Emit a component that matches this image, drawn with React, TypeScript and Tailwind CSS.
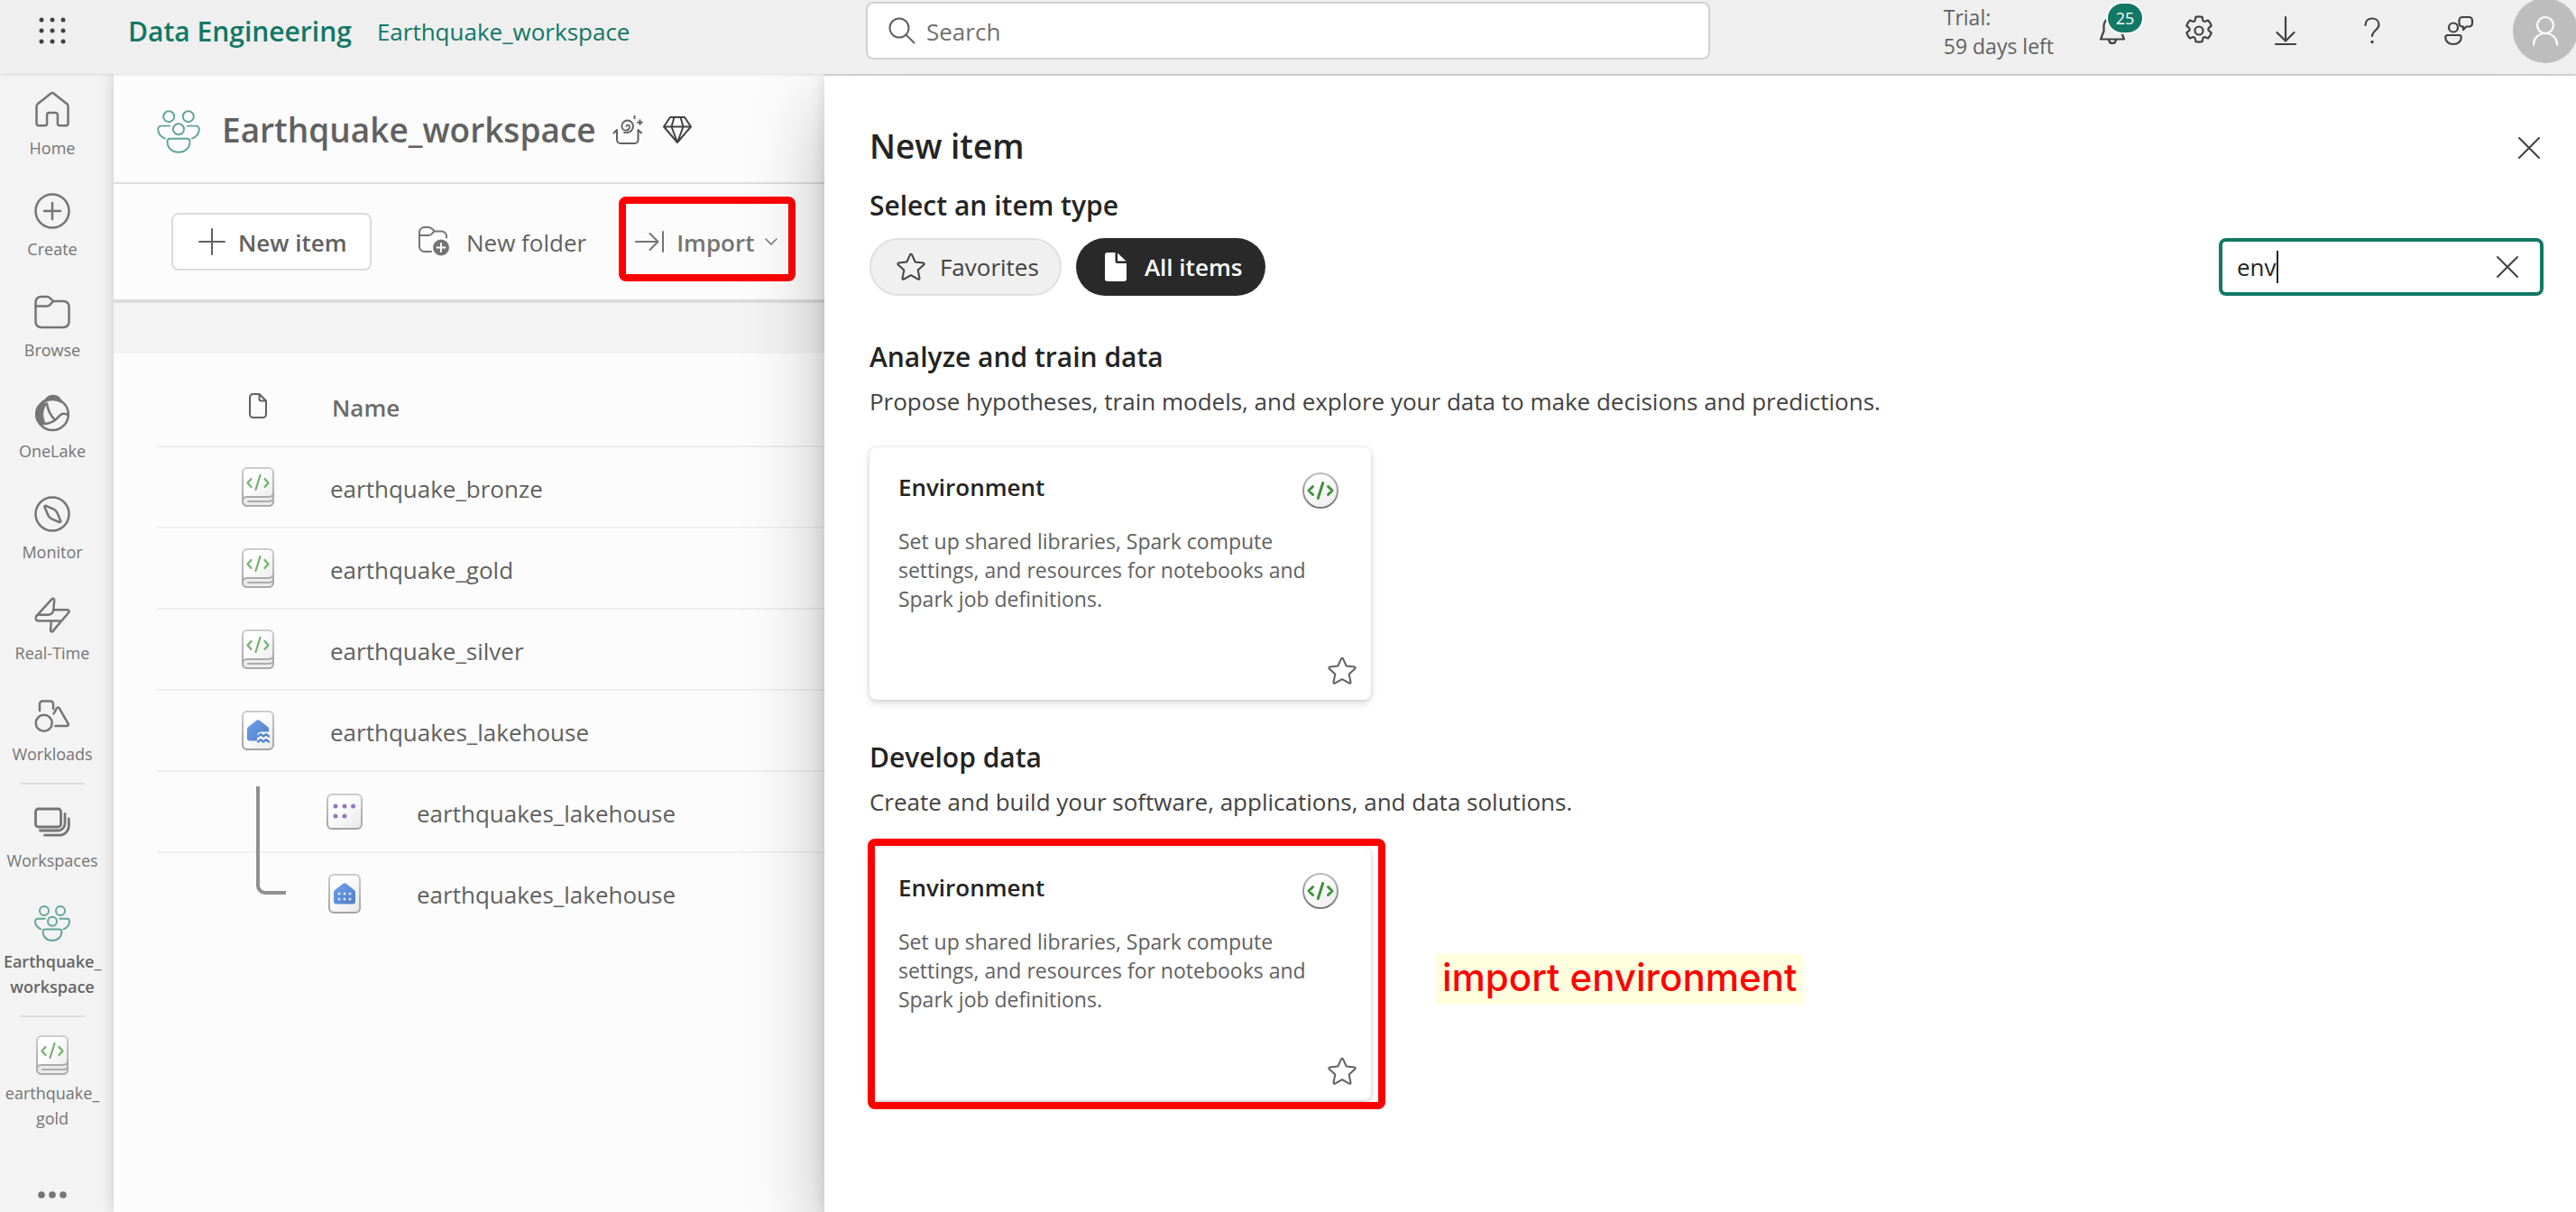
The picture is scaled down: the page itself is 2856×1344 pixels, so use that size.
import { useState, type ReactNode } from "react";

type IconProps = { w?: number; h?: number; sw?: number; className?: string; children: ReactNode };

function Icon({ w = 40, h = 40, sw = 2.5, className = "", children }: IconProps) {
  return (
    <svg
      width={w}
      height={h}
      viewBox={`0 0 ${w} ${h}`}
      fill="none"
      stroke="currentColor"
      strokeWidth={sw}
      strokeLinecap="round"
      strokeLinejoin="round"
      aria-hidden="true"
      className={`block shrink-0 overflow-visible ${className}`}
    >
      {children}
    </svg>
  );
}

const HomeIcon = () => (
  <Icon>
    <path d="M2.5 35V16c0-1 .5-2 1.2-2.7L18 1.9a3 3 0 0 1 4 0l14.3 11.4c.8.7 1.2 1.7 1.2 2.7V35a2.2 2.2 0 0 1-2.2 2.2h-7.2a2.2 2.2 0 0 1-2.2-2.2v-9.5a2.5 2.5 0 0 0-2.5-2.500h-6.800a2.500 2.500 0 0 0-2.500 2.500V35a2.200 2.200 0 0 1-2.200 2.200H4.700A2.200 2.200 0 0 1 2.500 35z" />
  </Icon>
);
const CreateIcon = () => (
  <Icon>
    <circle cx="20" cy="20" r="18.5" />
    <path d="M20 11v18M11 20h18" />
  </Icon>
);
const BrowseIcon = () => (
  <Icon>
    <path d="M1.5 9a6 6 0 0 1 6-6H14a5 5 0 0 1 3.5 1.5L21 8h11.500a6 6 0 0 1 6 6v17a6 6 0 0 1-6 6h-25a6 6 0 0 1-6-6z" />
    <path d="M1.5 13.5H14a4.500 4.500 0 0 0 3.300-1.400L21 8" />
  </Icon>
);
const OneLakeIcon = () => (
  <Icon>
    <circle cx="20.2" cy="21.5" r="17.6" />
    <path d="M9 8.500C1 11 .5 21 2.500 28l4.500 5 6-.5C8.500 26 8.500 16 13.500 10z" fill="currentColor" strokeWidth="1" />
    <path d="M11 8C13 3 17 .6 21 .6c4.600 0 8 3 9 7.600C25 4.800 17 4.600 11 8z" fill="currentColor" strokeWidth="1.5" />
    <path d="M14 9.500c.8 6.500 3.500 12.500 9 18.500M8 31.800c6 .5 11-.8 15-3.800 3.800-2.800 5-6.500 8.500-7.200 2.500-.5 4 .7 6.300 1" />
  </Icon>
);
const MonitorIcon = () => (
  <Icon>
    <circle cx="20" cy="20" r="18.5" />
    <path d="M11.5 12.2c-.4-1 .5-1.700 1.400-1.300l8.600 3.700c1.800.8 2.900 1.900 3.700 3.700l4 9.200c.4 1-.5 1.900-1.500 1.500l-9-3.900c-1.700-.8-2.600-1.800-3.300-3.500z" />
  </Icon>
);
const RealTimeIcon = () => (
  <Icon>
    <path d="M2.6 20.800 19.700 2.200c1-1 2.600-.4 2.500 1.100l-.8 10.200c-.4 4-2.600 6.200-6.400 6.200H4" />
    <path d="M21.800 14.300H36.800c1.700 0 2.400 1.600 1.300 2.900L20.600 37.900c-1 1.200-2.700.5-2.600-1L18.800 27" />
    <path d="M2.6 20.800c-2 2.400-1 5.700 2.200 5.700h23.400" />
  </Icon>
);
const WorkloadsIcon = () => (
  <Icon>
    <circle cx="10.7" cy="27.7" r="9" />
    <path d="M6 14V6.500A3 3 0 0 1 9 3.500h9a3 3 0 0 1 3 3V12" />
    <path d="m21.500 17.500 3.300-6.200a1.700 1.700 0 0 1 3 0L37.600 28.700a1.600 1.600 0 0 1-1.400 2.400H23.500" />
  </Icon>
);
const WorkspacesIcon = () => (
  <Icon sw={2.8}>
    <rect x="1.5" y="5" width="28" height="20" rx="3" />
    <path d="M6.500 29H26a8 8 0 0 0 8-8V10.500M11.500 34.200h16c6 0 10.800-4.500 10.800-10.500V16" />
  </Icon>
);

function PeopleIcon({ size }: { size: number }) {
  return (
    <svg
      width={size}
      height={size}
      viewBox="0 0 40 40"
      fill="none"
      stroke="#5fa596"
      strokeWidth={size > 40 ? 1.6 : 1.9}
      strokeLinecap="round"
      strokeLinejoin="round"
      aria-hidden="true"
      className="block shrink-0"
    >
      <circle cx="11" cy="6" r="5" />
      <circle cx="29" cy="6" r="5" />
      <circle cx="20" cy="17.7" r="5" />
      <path d="M11.700 14.700H3.900A2.900 2.900 0 0 0 1 17.600c0 4.300 2.500 7.300 6.500 8.700M28.300 14.700h7.800a2.900 2.900 0 0 1 2.900 2.900c0 4.300-2.500 7.300-6.500 8.700" />
      <path d="M12.200 26.500h15.600a2.600 2.600 0 0 1 2.600 2.600c0 6-4.200 9.900-10.400 9.900S9.600 35.100 9.600 29.100a2.600 2.600 0 0 1 2.600-2.600z" />
    </svg>
  );
}

function Defs() {
  return (
    <svg width="0" height="0" className="absolute" aria-hidden="true">
      <defs>
        <linearGradient id="paper" x1="0" y1="0" x2="1" y2="1">
          <stop offset="0.3" stopColor="#ffffff" />
          <stop offset="1" stopColor="#e9e9e9" />
        </linearGradient>
        <linearGradient id="edge" x1="0" y1="0" x2="0" y2="1">
          <stop offset="0" stopColor="#cbcbcb" />
          <stop offset="1" stopColor="#a3a3a3" />
        </linearGradient>
        <linearGradient id="edgeDark" x1="0" y1="0" x2="0" y2="1">
          <stop offset="0" stopColor="#bcbcbc" />
          <stop offset="1" stopColor="#7a7a7a" />
        </linearGradient>
        <linearGradient id="blue" x1="0" y1="0" x2="1" y2="1">
          <stop offset="0" stopColor="#6ea1f1" />
          <stop offset="1" stopColor="#4f7dc0" />
        </linearGradient>
      </defs>
    </svg>
  );
}

const NotebookIcon = () => (
  <Icon w={36} h={44} sw={2}>
    <rect x="1" y="1" width="34" height="42" rx="5" fill="url(#paper)" stroke="url(#edge)" />
    <path d="M1 38c0-3.500 1.500-5 4.500-5h24c3 0 5-1 5.500-3.500V38a5 5 0 0 1-5 5H6a5 5 0 0 1-5-5z" fill="#ececec" stroke="#ababab" />
    <path d="M7 38h23c2.800 0 4.500-1 5-3" stroke="#ababab" />
    <path d="m10.500 13-4 4.500 4 4.500M25.500 13l4 4.500-4 4.500M20.500 9l-5 16" stroke="#72b16c" strokeWidth="2.2" />
  </Icon>
);
const LakehouseIcon = () => (
  <Icon w={36} h={44} sw={2}>
    <rect x="1" y="1" width="34" height="42" rx="5" fill="url(#paper)" stroke="url(#edge)" />
    <path d="M6 20.500c0-1 .4-1.800 1.200-2.400l9-7.200a3 3 0 0 1 3.700 0l9 7.200c.7.600 1.100 1.400 1.100 2.400V33.500H9a3 3 0 0 1-3-3z" fill="url(#blue)" stroke="none" />
    <path d="M17 35V26.500c1-2 3-3 5-3h8v12z" fill="#f3f3f3" stroke="none" />
    <path d="m18 28.500 3-2.200 3 2.200 3-2.200 3 2.200M18 34.500l3-2.200 3 2.200 3-2.200 3 2.200" stroke="#5685cf" strokeWidth="2.3" />
  </Icon>
);
const SemanticModelIcon = () => (
  <Icon w={40} h={40} sw={2}>
    <rect x="1" y="1" width="38" height="38" rx="5" fill="url(#paper)" stroke="url(#edge)" />
    <g fill="#9478c6" stroke="none">
      <circle cx="10" cy="14" r="2.5" />
      <circle cx="20" cy="14" r="2.5" />
      <circle cx="29.5" cy="14" r="2.5" />
      <circle cx="10" cy="25" r="2.5" />
      <circle cx="20" cy="25" r="2.5" />
    </g>
  </Icon>
);
const SqlEndpointIcon = () => (
  <Icon w={36} h={44} sw={2}>
    <rect x="1" y="1" width="34" height="42" rx="5" fill="url(#paper)" stroke="url(#edge)" />
    <path d="M6 20.500c0-1 .4-1.800 1.200-2.400l9-7.200a3 3 0 0 1 3.700 0l9 7.200c.7.600 1.100 1.400 1.100 2.400V30.500a3 3 0 0 1-3 3H9a3 3 0 0 1-3-3z" fill="url(#blue)" stroke="none" />
    <g fill="#dfe9fb" stroke="none">
      {[12, 18, 24].map((x) => [22, 28].map((y) => <circle key={`${x}-${y}`} cx={x} cy={y} r="1.5" />))}
    </g>
  </Icon>
);
const EnvironmentIcon = () => (
  <Icon w={40} h={40} sw={2}>
    <circle cx="20" cy="20" r="19" fill="url(#paper)" stroke="url(#edgeDark)" />
    <path d="m11.500 15.500-4.500 4.500 4.500 4.500M28.500 15.500l4.500 4.500-4.500 4.500M22.700 11.500l-5.400 17" stroke="#3f9139" strokeWidth="3" />
  </Icon>
);
const StarIcon = () => (
  <Icon w={32} h={32} sw={2}>
    <path d="M15 2.300a1.100 1.100 0 0 1 2 0l3.700 8.200 9 1.100c.9.100 1.300 1.200.6 1.900l-6.600 6.100 1.800 8.900c.2.900-.8 1.600-1.600 1.100L16 25.200l-7.900 4.400c-.8.5-1.800-.2-1.600-1.100l1.800-8.900-6.600-6.100c-.7-.7-.3-1.800.6-1.900l9-1.100z" />
  </Icon>
);
const CloseIcon = () => (
  <Icon w={24} h={24} sw={2}>
    <path d="m1 1 22 22M23 1 1 23" />
  </Icon>
);
const SandboxIcon = () => (
  <Icon w={34} h={32} sw={2}>
    <path d="M1.500 19.500 5 16v11a4 4 0 0 0 4 4h15.500a4 4 0 0 0 4-4V16l3.500 3.500" />
    <path d="M13 18.800c5 1.200 10-1.800 10-7a6.300 6.300 0 0 0-12.600 0c0 3 2 5 4.700 4.800 2.500-.2 4-2 3.800-4.200-.3-2-2.800-2.400-3.400-.6" strokeWidth="1.9" />
    <path d="M24.500.8v2.400M30.500 5.300v4.800M28.100 7.700h4.800" />
  </Icon>
);
const GemIcon = () => (
  <Icon w={32} h={30} sw={2}>
    <path d="M8 1h16l7 10.500L16 29 1 11.500zM1 11.500h30M12.500 1 9.500 11.500 16 29l6.500-17.500L19.500 1" />
  </Icon>
);

type NavEntry = { label: string[]; icon: ReactNode; active?: boolean; divided?: boolean };

const nav: NavEntry[] = [
  { label: ["Home"], icon: <HomeIcon /> },
  { label: ["Create"], icon: <CreateIcon /> },
  { label: ["Browse"], icon: <BrowseIcon /> },
  { label: ["OneLake"], icon: <OneLakeIcon /> },
  { label: ["Monitor"], icon: <MonitorIcon /> },
  { label: ["Real-Time"], icon: <RealTimeIcon /> },
  { label: ["Workloads"], icon: <WorkloadsIcon /> },
  { label: ["Workspaces"], icon: <WorkspacesIcon />, divided: true },
  { label: ["Earthquake_", "workspace"], icon: <PeopleIcon size={40} />, active: true },
  { label: ["earthquake_", "gold"], icon: <NotebookIcon />, divided: true },
];

function SideNav() {
  return (
    <nav aria-label="Main" className="flex w-[126px] shrink-0 flex-col items-center bg-[#f3f3f3] pt-[2px] pr-[10px] text-[#757575]">
      {nav.map((n) => (
        <div key={n.label.join("")} className="flex w-full flex-col items-center">
          {n.divided && <div className="mb-1 h-[2px] w-[72px] bg-[#dcdcdc]" />}
          <a
            href="#"
            className={
              n.active
                ? "flex flex-col items-center gap-2 py-[18px] text-center text-[18px] leading-[28px] font-semibold text-[#666666]"
                : "flex flex-col items-center gap-2 py-[18px] text-center text-[18px] leading-[28px]"
            }
          >
            <span className="flex size-10 items-center justify-center">{n.icon}</span>
            <span>
              {n.label.map((l) => (
                <span key={l} className="block">
                  {l}
                </span>
              ))}
            </span>
          </a>
        </div>
      ))}
      <button aria-label="More" className="mt-auto flex h-[38px] w-10 items-center justify-center">
        <Icon w={32} h={8}>
          <g fill="currentColor" stroke="none">
            <circle cx="4" cy="4" r="3.8" />
            <circle cx="16" cy="4" r="3.8" />
            <circle cx="28" cy="4" r="3.8" />
          </g>
        </Icon>
      </button>
    </nav>
  );
}

function Header() {
  return (
    <header className="relative z-20 flex h-[82px] items-center bg-[#efefef] pb-[14px] text-[#424242] shadow-[0_1px_3px_rgba(0,0,0,0.12)]">
      <div className="flex flex-1 items-center whitespace-nowrap text-[#117865]">
        <button aria-label="App launcher" className="flex w-[116px] shrink-0 justify-center text-[#424242]">
          <Icon w={32} h={32}>
            <g fill="currentColor" stroke="none">
              {[4, 16, 28].map((x) => [4, 16, 28].map((y) => <circle key={`${x}-${y}`} cx={x} cy={y} r="2.5" />))}
            </g>
          </Icon>
        </button>
        <div className="flex items-center gap-7 pt-[2px] pl-[26px]">
          <a href="#" className="text-[30px] leading-10 font-semibold">
            Data Engineering
          </a>
          <a href="#" className="text-[26px] leading-10">
            Earthquake_workspace
          </a>
        </div>
      </div>
      <label className="flex h-16 w-[936px] shrink-0 items-center gap-3 rounded-lg border-2 border-[#d1d1d1] bg-white pl-[23px]">
        <Icon w={30} h={30} sw={2} className="text-[#616161]">
          <circle cx="12" cy="12" r="10.5" />
          <path d="m19.500 19.500 9 9" />
        </Icon>
        <input
          type="search"
          aria-label="Search"
          placeholder="Search"
          className="min-w-0 flex-1 bg-transparent pt-[2px] text-[26px] text-[#424242] outline-none placeholder:text-[#707070]"
        />
      </label>
      <div className="flex flex-1 items-center justify-end">
        <p className="pt-[2px] pr-[35px] text-[23px] leading-8 text-[#616161]">
          Trial:
          <br />
          59 days left
        </p>
        <div className="flex items-center gap-9">
          <button aria-label="Notifications, 25 new" className="relative flex w-[60px] justify-center">
            <Icon w={30} h={32} sw={2.2}>
              <path d="M15 1.500c-5.500 0-9.500 4-9.500 9.500v5.500L2 25.500h26l-3.500-9V11c0-5.500-4-9.500-9.500-9.500zM11 26c.3 2.500 2 4 4 4s3.700-1.500 4-4" />
            </Icon>
            <span className="absolute -top-[16px] left-[23px] flex h-9 min-w-[42px] items-center justify-center rounded-full border-2 border-white bg-[#117865] text-[18px] leading-none text-white">
              25
            </span>
          </button>
          <button aria-label="Settings" className="flex w-[60px] justify-center">
            <Icon w={34} h={34} sw={2.2}>
              <circle cx="17" cy="17" r="4.5" />
              <path d="M13.400 1.800a17 17 0 0 1 7.200 0l.6 3.300a2 2 0 0 0 2.700 1.600l3.200-1.200a16 16 0 0 1 3.600 6.200l-2.600 2.200a2 2 0 0 0 0 3.200l2.600 2.200a16 16 0 0 1-3.600 6.200l-3.200-1.200a2 2 0 0 0-2.700 1.600l-.6 3.300a17 17 0 0 1-7.200 0l-.6-3.300a2 2 0 0 0-2.700-1.600l-3.200 1.200a16 16 0 0 1-3.600-6.200l2.600-2.200a2 2 0 0 0 0-3.200l-2.600-2.200a16 16 0 0 1 3.600-6.200l3.200 1.200a2 2 0 0 0 2.700-1.600z" />
            </Icon>
          </button>
          <button aria-label="Download" className="flex w-[60px] justify-center">
            <Icon w={24} h={32} sw={2.2}>
              <path d="M12 1v26M2.500 18l9.500 9.500 9.500-9.500M1 31h22" />
            </Icon>
          </button>
          <button aria-label="Help" className="flex w-[60px] justify-center">
            <Icon w={18} h={30} sw={2.2}>
              <path d="M1.500 9C1.500 4.500 4.500 1.500 9 1.500s7.500 3 7.500 7c0 5.500-7.500 6.500-7.500 12.500" />
              <circle cx="9" cy="27.5" r="1.7" fill="currentColor" stroke="none" />
            </Icon>
          </button>
          <button aria-label="Feedback" className="flex w-[60px] justify-center">
            <Icon w={32} h={32} sw={2.2}>
              <circle cx="10" cy="12.5" r="5" />
              <path d="M3.500 21h13a2.300 2.300 0 0 1 2.300 2.300c0 4.500-3.500 7.700-8.800 7.700s-8.800-3.200-8.800-7.700A2.300 2.300 0 0 1 3.500 21z" />
              <path d="M20 1h7.500a3.500 3.500 0 0 1 3.500 3.500V8a3.500 3.500 0 0 1-3.500 3.500h-3L21 15v-3.500h-1A3.500 3.500 0 0 1 16.500 8V4.500A3.500 3.500 0 0 1 20 1z" />
            </Icon>
          </button>
          <button aria-label="Account" className="-mr-[2px] -ml-[6px] flex size-[72px] shrink-0 items-center justify-center rounded-full bg-[#bdbdbd] text-white">
            <Icon w={28} h={32} sw={2.2}>
              <circle cx="14" cy="10" r="9" />
              <path d="M1 31.500c0-7 5.500-12.500 13-12.500s13 5.500 13 12.500" />
            </Icon>
          </button>
        </div>
      </div>
    </header>
  );
}

const rows = [
  { name: "earthquake_bronze", icon: <NotebookIcon /> },
  { name: "earthquake_gold", icon: <NotebookIcon /> },
  { name: "earthquake_silver", icon: <NotebookIcon /> },
  { name: "earthquakes_lakehouse", icon: <LakehouseIcon /> },
];

const children = [
  { kind: "Semantic model", icon: <SemanticModelIcon /> },
  { kind: "SQL analytics endpoint", icon: <SqlEndpointIcon /> },
];

function Workspace() {
  return (
    <main className="min-w-0 flex-1 overflow-hidden bg-[#fcfcfc] text-[26px] whitespace-nowrap text-[#616161]">
      <div className="flex h-[122px] items-center border-b-2 border-[#dcdcdc] pt-2 pl-12">
        <PeopleIcon size={48} />
        <h1 className="pb-1 pl-6 text-[37px] leading-[52px] font-semibold">Earthquake_workspace</h1>
        <span className="flex items-center gap-[22px] pb-1 pl-[18px]">
          <SandboxIcon />
          <span className="text-[#424242]">
            <GemIcon />
          </span>
        </span>
      </div>
      <div className="flex h-[132px] items-center border-b-4 border-[#dcdcdc] pl-16">
        <button className="flex h-16 w-[222px] items-center gap-[14px] rounded-lg border-2 border-[#dcdcdc] bg-white pl-7 font-semibold">
          <Icon w={30} h={30} sw={2}>
            <path d="M15 1v28M1 15h28" />
          </Icon>
          <span className="pt-[2px]">New item</span>
        </button>
        <button className="ml-[52px] flex items-center gap-[19px]">
          <Icon w={34} h={34} sw={2} className="text-[#747474]">
            <path d="M14 28H6.500A5.500 5.500 0 0 1 1 22.500v-16A5.500 5.500 0 0 1 6.500 1h4.700c1.200 0 2.300.5 3.200 1.300L18 5.500h7.500A5.500 5.500 0 0 1 31 11v1.500M1 10h10c1.300 0 2.500-.5 3.400-1.400L17.500 5.500" />
            <circle cx="25" cy="23.5" r="9" fill="currentColor" stroke="none" />
            <path d="M25 19v9M20.500 23.500h9" stroke="#ffffff" />
          </Icon>
          <span className="pt-[2px]">New folder</span>
        </button>
        <button className="mb-[6px] ml-9 flex h-[94px] w-[196px] items-center rounded-lg border-8 border-[#ff0000] pt-[6px] pl-[10px] font-semibold text-[#747474]">
          <Icon w={32} h={24} sw={2}>
            <path d="M1 12h24M16.500 3l9 9-9 9M31 1v22" />
          </Icon>
          <span className="pt-[2px] pl-[14px]">Import</span>
          <Icon w={14} h={8} sw={1.5} className="ml-3">
            <path d="m1 1 6 6 6-6" />
          </Icon>
        </button>
      </div>
      <div className="h-14 bg-[#f3f3f3]" />
      <div className="pl-12">
        <table className="w-full border-collapse text-left">
          <thead>
            <tr className="h-[103px] border-b-2 border-[#eeeeee]">
              <th scope="col" aria-label="Type" className="w-[188px] pt-[14px] pl-[102px]">
                <Icon w={20} h={28} sw={2}>
                  <path d="M4.500 1h7L19 8.500v15a3.500 3.500 0 0 1-3.500 3.500h-11A3.500 3.500 0 0 1 1 23.500v-19A3.500 3.500 0 0 1 4.500 1zM11.500 1v5.500a2 2 0 0 0 2 2H19" />
                </Icon>
              </th>
              <th scope="col" className="pt-[18px] pl-[6px] font-semibold text-[#6b6b6b]">
                Name
              </th>
            </tr>
          </thead>
          <tbody>
            {rows.map((r) => (
              <tr key={r.name} className="h-[90px] border-b-2 border-[#eeeeee]">
                <td className="pl-[94px]">{r.icon}</td>
                <td className="pt-1 pl-1">
                  <a href="#">{r.name}</a>
                </td>
              </tr>
            ))}
            {children.map((c, i) => (
              <tr key={c.kind} className="h-[90px] border-b-2 border-[#eeeeee] last:border-b-0">
                <td className="relative">
                  {i === 0 && (
                    <span className="absolute top-4 left-[110px] h-[120px] w-[33px] rounded-bl-[10px] border-b-4 border-l-4 border-[#909090]" />
                  )}
                </td>
                <td>
                  <a href="#" className="flex items-center gap-[60px]">
                    <span className="flex w-10 justify-center">{c.icon}</span>
                    <span className="pt-1">earthquakes_lakehouse</span>
                  </a>
                </td>
              </tr>
            ))}
          </tbody>
        </table>
      </div>
    </main>
  );
}

function ItemCard() {
  return (
    <article className="flex h-[280px] w-[556px] flex-col rounded-lg bg-white pt-[26px] pr-4 pb-4 pl-8 shadow-[0_0_4px_rgba(0,0,0,0.12),0_4px_8px_rgba(0,0,0,0.14)]">
      <div className="flex items-center justify-between pr-5">
        <h3 className="pb-[6px] text-[26px] leading-9 font-semibold">Environment</h3>
        <div className="pt-[2px]">
          <EnvironmentIcon />
        </div>
      </div>
      <p className="max-w-[460px] pt-5 text-[23px] leading-8 text-[#616161]">
        Set up shared libraries, Spark compute settings, and resources for notebooks and Spark job definitions.
      </p>
      <button aria-label="Add Environment to favorites" className="mt-auto ml-auto text-[#616161]">
        <StarIcon />
      </button>
    </article>
  );
}

function NewItemPanel() {
  const [query, setQuery] = useState("env");
  return (
    <aside
      aria-label="New item"
      className="relative z-10 mt-[2px] w-[68%] shrink-0 bg-white pt-[54px] pr-9 pl-[50px] text-[#242424] shadow-[0_0_16px_rgba(0,0,0,0.12),0_32px_80px_rgba(0,0,0,0.26)]"
    >
      <div className="flex items-center justify-between pr-1">
        <h2 className="pb-1 text-[37px] leading-[48px] font-semibold">New item</h2>
        <button aria-label="Close" className="text-[#424242]">
          <CloseIcon />
        </button>
      </div>
      <p className="pt-[18px] text-[30px] leading-10 font-semibold">Select an item type</p>
      <div className="flex items-center justify-between pt-4">
        <div className="flex gap-4 text-[26px]">
          <button className="flex h-16 w-[213px] items-center gap-4 rounded-full border-2 border-[#e0e0e0] bg-[#f0f0f0] pl-7 text-[#424242]">
            <StarIcon />
            Favorites
          </button>
          <button className="flex h-16 w-[210px] items-center gap-5 rounded-full bg-[#292929] pl-8 font-semibold text-white">
            <Icon w={24} h={32}>
              <path d="M3 0h8.500v9.500a2.500 2.500 0 0 0 2.500 2.500h10v17a3 3 0 0 1-3 3H3a3 3 0 0 1-3-3V3a3 3 0 0 1 3-3zM14 .5 23.500 9.500H14z" fill="currentColor" stroke="none" />
            </Icon>
            All items
          </button>
        </div>
        <div className="flex h-16 w-[360px] items-center rounded-lg border-4 border-[#117865] bg-white pr-6 pl-4">
          <input
            aria-label="Filter items"
            value={query}
            onChange={(e) => setQuery(e.target.value)}
            className="max-w-[270px] min-w-0 [field-sizing:content] bg-transparent text-[26px] outline-none"
          />
          <span className="h-9 w-[2px] bg-[#242424]" />
          <button aria-label="Clear" onClick={() => setQuery("")} className="ml-auto text-[#424242]">
            <CloseIcon />
          </button>
        </div>
      </div>

      <section className="pt-12">
        <h2 className="text-[30px] leading-10 font-semibold">Analyze and train data</h2>
        <p className="pt-[9px] text-[26px] leading-10 text-[#424242]">
          Propose hypotheses, train models, and explore your data to make decisions and predictions.
        </p>
        <div className="pt-[31px]">
          <ItemCard />
        </div>
      </section>

      <section className="pt-11">
        <h2 className="text-[30px] leading-10 font-semibold">Develop data</h2>
        <p className="pt-[9px] text-[26px] leading-10 text-[#424242]">Create and build your software, applications, and data solutions.</p>
        <div className="flex items-center gap-[71px] pt-[31px]">
          <div className="relative">
            <ItemCard />
            <span className="pointer-events-none absolute -top-[10px] -right-4 -bottom-[10px] -left-[2px] rounded-lg border-8 border-[#ff0000]" />
          </div>
          <span className="mt-3 bg-[#ffffe0] px-2 pb-1 font-[Inter,sans-serif] text-[42px] leading-[52px] font-medium text-[#ff0000]">
            import environment
          </span>
        </div>
      </section>
    </aside>
  );
}

export default function App() {
  return (
    <div className="flex min-h-screen flex-col overflow-hidden bg-[#f3f3f3] font-['Open_Sans',sans-serif]">
      <Defs />
      <Header />
      <div className="flex flex-1">
        <SideNav />
        <div className="flex min-w-0 flex-1 shadow-[0_0_16px_rgba(0,0,0,0.18)]">
          <Workspace />
        </div>
        <NewItemPanel />
      </div>
    </div>
  );
}
